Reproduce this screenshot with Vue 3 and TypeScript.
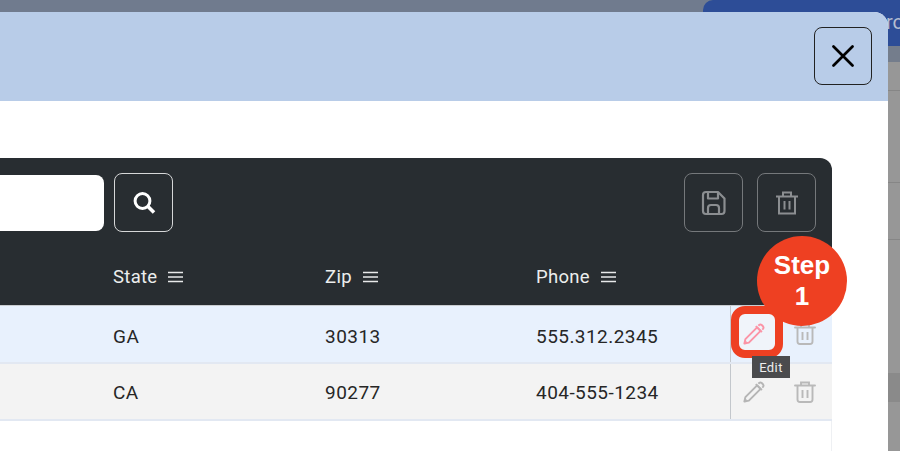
<script setup lang="ts">
const headers = [
  { label: 'State', width: 212 },
  { label: 'Zip', width: 211 },
  { label: 'Phone', width: 194 },
]
const rows = [
  { state: 'GA', zip: '30313', phone: '555.312.2345', active: true },
  { state: 'CA', zip: '90277', phone: '404-555-1234', active: false },
]
</script>

<template>
  <div class="page">
    <div class="backdrop">
      <div class="back-strip"></div>
      <div class="back-strip2"></div>
      <div class="back-tab"><span>ro</span></div>
      <div class="back-line l1"></div>
      <div class="back-line l2"></div>
      <div class="back-line l3"></div>
      <div class="back-line l4"></div>
    </div>
    <section class="modal">
      <header class="modal-head">
        <button class="close" aria-label="Close">
          <svg width="22" height="22" viewBox="0 0 22 22"><path d="M1.5 1.5 L20.5 20.5 M20.5 1.5 L1.5 20.5" stroke="#000" stroke-width="2.7" stroke-linecap="round" /></svg>
        </button>
      </header>
      <div class="modal-body">
        <div class="grid">
          <div class="toolbar">
            <div class="search-input"></div>
            <button class="tool search">
              <svg width="26" height="26" viewBox="0 0 26 26" fill="none"><circle cx="11.5" cy="11" r="7.4" stroke="#fff" stroke-width="3" /><path d="M17 16.5 L23 22.5" stroke="#fff" stroke-width="3.6" /></svg>
            </button>
            <div class="spacer"></div>
            <button class="tool muted">
              <svg width="26" height="26" viewBox="0 0 26 26" fill="none" stroke="#8b8e91" stroke-width="2.2" stroke-linejoin="round"><path d="M5 2 H17 L23.5 8.5 V21 Q23.5 24 20.5 24 H5 Q2 24 2 21 V5 Q2 2 5 2 Z" /><path d="M7 2 V8.5 H17 V2" /><path d="M7 24 V18 Q7 15 10 15 H15 Q18 15 18 18 V24" /></svg>
            </button>
            <button class="tool muted">
              <svg width="24" height="24" viewBox="0 0 24 24" fill="none" stroke="#8b8e91" stroke-width="2"><path d="M1 5.5 H23" /><path d="M8 5 V1.5 H16 V5" /><path d="M4 6 V22.5 H20 V6" /><path d="M9.5 10 V18.5 M14.5 10 V18.5" /></svg>
            </button>
          </div>
          <div class="head-row">
            <div v-for="h in headers" :key="h.label" class="head-cell" :style="{ width: h.width + 'px' }">
              <span>{{ h.label }}</span>
              <svg width="15" height="12" viewBox="0 0 15 12"><path d="M0 1.5 H15 M0 6 H15 M0 10.5 H15" stroke="#e8e9ea" stroke-width="1.5" /></svg>
            </div>
          </div>
          <div v-for="r in rows" :key="r.state" class="row" :class="{ active: r.active }">
            <div class="cell" :style="{ width: headers[0].width + 'px' }">{{ r.state }}</div>
            <div class="cell" :style="{ width: headers[1].width + 'px' }">{{ r.zip }}</div>
            <div class="cell" :style="{ width: headers[2].width + 'px' }">{{ r.phone }}</div>
            <div class="actions">
              <span class="edit-wrap" :class="{ on: r.active }">
                <span v-if="r.active" class="ring"></span>
                <svg width="22" height="22" viewBox="0 0 24 24" fill="none" class="pencil" stroke="currentColor" stroke-width="2.1" stroke-linejoin="round"><path d="M1.5 22.5 L2.6 17.6 L15.4 4.8 L19.2 8.6 L6.400 21.400 Z" /><path d="M1.500 22.500 L3.800 20.200" /><path d="M14 3.400 L20.600 10" /><path d="M16.800 3 L17.600 2.200 Q19 1 20.400 2.200 L21.800 3.600 Q23 5 21.800 6.400 L21 7.200" /></svg>
              </span>
              <span class="bin">
                <svg width="22" height="22" viewBox="0 0 22 22" fill="none" stroke="#b9b9b9" stroke-width="1.9"><path d="M1 4.500 H21" stroke-linecap="round" /><path d="M7 4.500 V1.500 H15 V4.500" /><path d="M3.500 5 V18.500 Q3.500 21 6 21 H16 Q18.500 21 18.500 18.500 V5" /><path d="M8.500 9 V17 M13.500 9 V17" /></svg>
              </span>
            </div>
          </div>
          <div class="grid-foot"></div>
        </div>
      </div>
    </section>
    <div class="step">Step<br />1</div>
    <div class="tooltip">Edit</div>
  </div>
</template>

<style scoped>
.page {
  position: relative;
  width: 900px;
  height: 451px;
  overflow: hidden;
  background: #979797;
  font-family: Roboto, "Liberation Sans", sans-serif;
}
.backdrop { position: absolute; inset: 0; }
.back-strip { height: 12px; background: #707b8e; }
.back-strip2 { position: absolute; left: 880px; top: 46px; width: 20px; height: 16px; background: #747d8c; }
.back-tab {
  position: absolute; left: 703px; top: 0; width: 197px; height: 46px;
  background: #2d4d97; border-radius: 10px 0 0 0;
  color: #b5bdd0; font-size: 20px; text-align: right;
  padding-top: 10px; box-sizing: border-box;
}
.back-tab span { margin-right: -4px; }
.back-line { position: absolute; left: 888px; width: 12px; height: 1px; background: #868686; }
.l1 { top: 90px; } .l2 { top: 182px; } .l3 { top: 239px; } .l4 { top: 373px; height: 29px; background: #8a8a8a; }
.modal {
  position: absolute;
  left: -40px; top: 12px;
  width: 928px; height: 460px;
  background: #fff;
  border-radius: 0 14px 0 0;
  overflow: hidden;
}
.modal-head {
  background: #b8cce8;
  display: flex; justify-content: flex-end; align-items: flex-start;
  padding: 15px 16px 0 0;
  box-sizing: border-box;
  height: 89px;
}
.close {
  width: 58px; height: 58px;
  border: 1.5px solid #222; border-radius: 8px;
  background: transparent;
  display: flex; align-items: center; justify-content: center; padding: 0;
}
.modal-body { padding: 57px 56px 0 0; display: flex; justify-content: flex-end; }
.grid {
  width: 872px;
}
.toolbar {
  height: 90px;
  background: #282d31;
  border-radius: 0 12px 0 0;
  display: flex; align-items: flex-start;
  padding: 15px 16px 0 0;
  box-sizing: border-box;
  gap: 14px;
}
.search-input {
  width: 144px; height: 56px; margin-top: 2px;
  background: #fff; border-radius: 0 8px 8px 0;
}
.tool {
  width: 59px; height: 59px; border-radius: 8px; background: transparent; padding: 0;
  display: flex; align-items: center; justify-content: center;
  border: 1px solid #d6d7d8;
}
.tool.search { margin-left: -4px; }
.tool.muted { border-color: #75787b; }
.spacer { flex: 1; }
.head-row {
  height: 58px; background: #282d31; display: flex; align-items: center;
  padding-left: 153px;
  box-sizing: border-box;
  color: #eceded; font-size: 18.500px;
  border-bottom: 1px solid #c9ccd0;
}
.head-cell { display: flex; align-items: center; gap: 11px; height: 100%; padding-top: 1px; box-sizing: border-box; letter-spacing: 0.3px; }
.row {
  display: flex; align-items: center;
  height: 57px;
  padding-left: 153px;
  background: #f3f3f3;
  border-bottom: 2px solid #e2e8f2;
  box-sizing: border-box;
  color: #262626; font-size: 19px;
  letter-spacing: 0.45px;
}
.row.active { background: #e8f1fd; height: 58px; }
.cell { box-sizing: border-box; padding-top: 2px; }
.row.active .cell { padding-top: 4px; }
.actions {
  display: flex; align-items: center; height: 100%;
  border-left: 1px solid #c3c7cc;
  flex: 1;
  padding-left: 12px;
  gap: 29px;
  box-sizing: border-box;
}
.edit-wrap {
  position: relative;
  width: 22px; height: 22px; flex: none;
  display: flex; align-items: center; justify-content: center;
  color: #b5b5b5;
}
.edit-wrap.on { color: #fb94a6; }
.pencil { position: relative; }
.ring {
  position: absolute; left: -12px; top: -17px;
  width: 52px; height: 52px; box-sizing: border-box;
  border: 8px solid #ee4022; border-radius: 14px;
  background: #f0f4fa;
}
.bin { display: flex; }
.grid-foot { height: 60px; border-right: 1px solid #eef0f3; }
.step {
  position: absolute; left: 757px; top: 236px; width: 90px; height: 90px; border-radius: 50%;
  background: #ee4022; color: #fff; font-weight: 700; font-size: 26px; line-height: 31px;
  text-align: center; padding-top: 14px; box-sizing: border-box;
  font-family: "Liberation Sans", Arial, sans-serif;
}
.tooltip {
  position: absolute; left: 752px; top: 356px; width: 38px; height: 22px;
  background: #4a4b4d; color: #eee; font-size: 13px; line-height: 23px; text-align: center;
  letter-spacing: 0.4px;
}
</style>
